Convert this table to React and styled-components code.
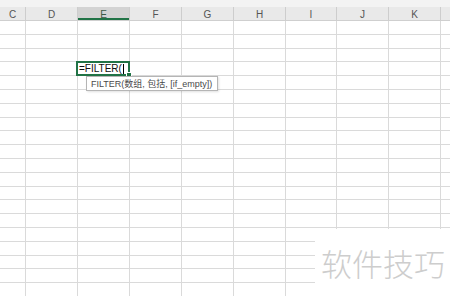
import React from "react";
import styled, { createGlobalStyle } from "styled-components";

const Global = createGlobalStyle`
  html, body { margin: 0; padding: 0; background: #fff; overflow: hidden; }
  body { font-family: "Liberation Sans", Arial, sans-serif; }
`;

const COLS = [
  { name: "C", w: 26 },
  { name: "D", w: 52 },
  { name: "E", w: 52 },
  { name: "F", w: 52 },
  { name: "G", w: 52 },
  { name: "H", w: 52 },
  { name: "I", w: 51 },
  { name: "J", w: 52 },
  { name: "K", w: 52 },
  { name: "", w: 20 },
];
const ROWS = 21;
const ACTIVE_ROW = 3;
const ACTIVE_COL = 2;

const Sheet = styled.div`
  position: relative;
  width: 450px;
  height: 296px;
  overflow: hidden;
  background: #fff;
`;

const TopStrip = styled.div`
  height: 7px;
  background: #f3f3f3;
`;

const HeaderRow = styled.div`
  display: flex;
  height: 13px;
  background: #e9e9e9;
  border-bottom: 1px solid #cfcfcf;
`;

const HeaderCell = styled.div`
  flex: 0 0 ${(p) => p.$w}px;
  box-sizing: border-box;
  border-right: 1px solid #cdcdcd;
  display: flex;
  align-items: center;
  justify-content: center;
  font-size: 10px;
  color: ${(p) => (p.$active ? "#3d5a45" : "#555")};
  background: ${(p) => (p.$active ? "#d3d3d3" : "transparent")};
  box-shadow: ${(p) => (p.$active ? "inset 0 -2px 0 #217346" : "none")};
  padding-top: 1px;
`;

const Row = styled.div`
  display: flex;
  height: 13.8px;
  box-sizing: border-box;
  border-bottom: 1px solid #dadada;
`;

const Cell = styled.div`
  position: relative;
  flex: 0 0 ${(p) => p.$w}px;
  box-sizing: border-box;
  border-right: 1px solid #dadada;
`;

const ActiveBox = styled.div`
  position: absolute;
  left: -2px;
  top: -1px;
  right: -1px;
  bottom: -1px;
  border: 2px solid #217346;
  z-index: 2;
  display: flex;
  align-items: center;
  padding-left: 1px;
  font-size: 10px;
  color: #111;
  line-height: 1;
  white-space: nowrap;
`;

const Caret = styled.span`
  display: inline-block;
  width: 1px;
  height: 10px;
  background: #000;
  margin-left: 1px;
`;

const Handle = styled.span`
  position: absolute;
  right: -4px;
  bottom: -4px;
  width: 4px;
  height: 4px;
  background: #217346;
  border: 1px solid #fff;
`;

const Tooltip = styled.div`
  position: absolute;
  left: 86px;
  top: 76px;
  height: 15px;
  box-sizing: border-box;
  padding: 0 5px 0 4px;
  border: 1px solid #b5b5b5;
  background: #fff;
  box-shadow: 1px 1px 2px rgba(0, 0, 0, 0.12);
  display: flex;
  align-items: center;
  font-family: "Liberation Sans", "Noto Sans CJK SC", sans-serif;
  font-size: 9px;
  color: #4a4a4a;
  white-space: nowrap;
  z-index: 3;
`;

const Watermark = styled.div`
  position: absolute;
  left: 315px;
  top: 229px;
  right: 0;
  bottom: 0;
  background: #fff;
  display: flex;
  align-items: center;
  justify-content: flex-end;
  padding-right: 5px;
  font-family: "Noto Sans CJK SC", sans-serif;
  font-weight: 300;
  font-size: 31px;
  letter-spacing: 0px;
  color: #cdcdcd;
  z-index: 4;
`;

export default function App() {
  return (
    <Sheet>
      <Global />
      <TopStrip />
      <HeaderRow>
        {COLS.map((c, i) => (
          <HeaderCell key={i} $w={c.w} $active={i === ACTIVE_COL}>
            {c.name}
          </HeaderCell>
        ))}
      </HeaderRow>
      {Array.from({ length: ROWS }).map((_, r) => (
        <Row key={r}>
          {COLS.map((c, i) => (
            <Cell key={i} $w={c.w}>
              {r === ACTIVE_ROW && i === ACTIVE_COL && (
                <ActiveBox>
                  =FILTER(
                  <Caret />
                  <Handle />
                </ActiveBox>
              )}
            </Cell>
          ))}
        </Row>
      ))}
      <Tooltip>FILTER(数组, 包括, [if_empty])</Tooltip>
      <Watermark>软件技巧</Watermark>
    </Sheet>
  );
}
